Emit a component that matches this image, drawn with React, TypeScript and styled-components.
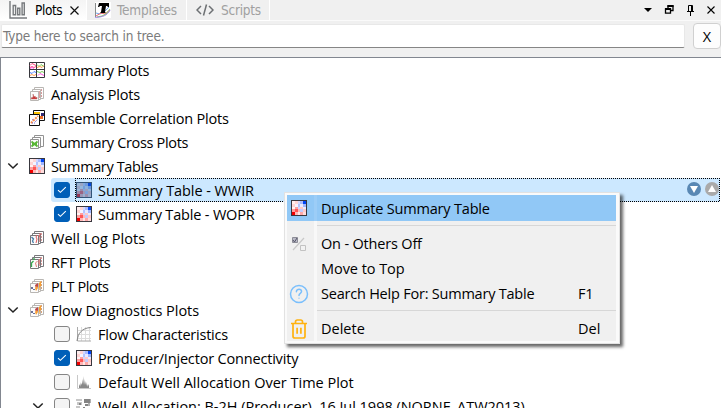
import React from "react";
import styled, { createGlobalStyle, css } from "styled-components";

const Global = createGlobalStyle`
  * { box-sizing: border-box; }
  html, body { margin: 0; overflow: hidden; background: #f0f0f0; }
`;

const Window = styled.main`
  position: relative;
  display: flex;
  flex-direction: column;
  width: 721px;
  height: 408px;
  overflow: hidden;
  background: #f0f0f0;
  color: #000;
  font-family: "Open Sans", "Noto Sans", sans-serif;
  font-size: 14.5px;
`;

const tahoma = css`
  font-family: "DejaVu Sans Condensed", "DejaVu Sans", sans-serif;
  font-stretch: condensed;
  font-size: 13.5px;
`;

const Label = styled.span<{ $track?: number }>`
  white-space: pre;
  letter-spacing: ${(p) => p.$track ?? 0}px;
`;

const TabBar = styled.nav`
  display: flex;
  height: 21px;
  flex: none;
`;

const Tab = styled.div<{ $width: number; $active?: boolean; $pad: number; $gap: number }>`
  ${tahoma}
  display: flex;
  align-items: center;
  width: ${(p) => p.$width}px;
  padding-left: ${(p) => p.$pad}px;
  gap: ${(p) => p.$gap}px;
  color: ${(p) => (p.$active ? "#000" : "#a0a0a0")};
  background: ${(p) => (p.$active ? "linear-gradient(#f4f4f4, #fff)" : "#f0f0f0")};
  border-right: 1px solid #fff;
  border-bottom: 1px solid #fff;
  svg { flex: none; }
`;

const DockButtons = styled.div`
  display: flex;
  flex: 1;
  align-items: center;
  justify-content: flex-end;
  padding-right: 5px;
  border-bottom: 1px solid #fafafa;
`;

const SearchRow = styled.div`
  display: flex;
  height: 36px;
  flex: none;
  padding: 3px 0 0 1px;
`;

const SearchField = styled.div`
  ${tahoma}
  display: flex;
  align-items: center;
  width: 684px;
  height: 24px;
  padding: 0 0 1px 1px;
  color: #7b7b7b;
  background: #fff;
  border: 1px solid #e8e8e8;
  border-bottom-color: #868686;
  border-radius: 2px;
`;

const ClearButton = styled.button`
  display: flex;
  align-items: center;
  justify-content: center;
  width: 28px;
  height: 26px;
  margin: -1px 0 0 8px;
  padding: 0;
  font: inherit;
  color: #000;
  background: #fdfdfd;
  border: 1px solid #d0d0d0;
  border-radius: 4px;
`;

const Tree = styled.ul`
  flex: 1;
  min-height: 0;
  margin: 0;
  padding: 0;
  overflow: hidden;
  list-style: none;
  background: #fff;
  border-top: 1px solid #828790;
  border-left: 1px solid #828790;
`;

const TreeRow = styled.li<{ $nested?: boolean }>`
  display: flex;
  height: 24px;
  align-items: center;
  padding-left: ${(p) => (p.$nested ? 25 : 0)}px;
`;

const Twisty = styled.div`
  display: flex;
  width: 25px;
  height: 24px;
  align-items: center;
  padding-left: 6px;
`;

const CheckCell = styled.div<{ $selected?: boolean }>`
  display: flex;
  width: 24px;
  height: 24px;
  align-items: center;
  padding-left: 3px;
  background: ${(p) => (p.$selected ? "#cce8ff" : "transparent")};
  border-radius: 3px 0 0 3px;
`;

const CheckBox = styled.span<{ $on?: boolean }>`
  display: flex;
  width: 16px;
  height: 16px;
  align-items: center;
  justify-content: center;
  background: ${(p) => (p.$on ? "#005fb8" : "#f4f4f4")};
  border: 1px solid ${(p) => (p.$on ? "#005fb8" : "#858585")};
  border-radius: 3px;
`;

const ItemBody = styled.div<{ $selected?: boolean; $top?: boolean }>`
  position: relative;
  display: flex;
  width: ${(p) => (p.$selected ? "645px" : "auto")};
  height: 24px;
  align-items: center;
  gap: 6px;
  padding-left: ${(p) => (p.$top ? 3 : 1)}px;
  background: ${(p) => (p.$selected ? "#cce8ff" : "transparent")};
  svg { flex: none; }
`;

const FocusOutline = styled.svg`
  position: absolute;
  inset: 0;
`;

const RowActions = styled.div`
  display: flex;
  gap: 4px;
  margin: -2px 1px 0 auto;
`;

const Menu = styled.div`
  position: absolute;
  left: 284px;
  top: 192px;
  width: 336px;
  height: 152px;
  padding: 2px;
  background: #fafafa;
  border: 1px solid #e2e2e2;
  box-shadow: 3px 3px 3px rgba(0, 0, 0, 0.6);
`;

const MenuPanel = styled.div`
  width: 329px;
  height: 146px;
  padding-top: 1px;
  background: linear-gradient(to right, #f0f0f0 27px, #f8f8f8 27px, #f8f8f8 30px, #f0f0f0 30px);
`;

const MenuItem = styled.div<{ $hot?: boolean }>`
  display: grid;
  grid-template-columns: 34px 257px 1fr;
  height: 25px;
  align-items: center;
  ${(p) =>
    p.$hot &&
    css`
      height: 26px;
      margin-top: -1px;
      background: linear-gradient(to right, #91c8f6 27px, #9ccdf7 27px, #9ccdf7 30px, #91c8f6 30px);
    `}
`;

const MenuIcon = styled.span`
  display: flex;
  width: 24px;
  align-items: center;
  justify-content: center;
`;

const MenuLine = styled.div`
  height: 1px;
  margin: 4px 0 5px 30px;
  background: #d7d7d7;
`;

/* Icons */

const heatCells = [
  ["#ffeeee", "#ffd4d4", "#d0d8ff", "#a9baff", "#0045f5"],
  ["#ffd4d4", "#f4f4ff", "#b3c3ff", "#e7eaff", "#9fb4ff"],
  ["#fff2f2", "#ff9e9e", "#cdd6ff", "#ffc8c8", "#e9ecff"],
  ["#ff9e9e", "#ff5555", "#ffb8b8", "#c0ccff", "#ffc9c9"],
  ["#f20000", "#ffb6b6", "#ffe4e4", "#ffa8a8", "#ffdcdc"],
];

const HeatIcon = ({ dim }: { dim?: boolean }) => (
  <svg width="16" height="16" viewBox="0 0 16 16" shapeRendering="crispEdges">
    <rect width="16" height="16" fill="#38373e" />
    {heatCells.map((row, y) =>
      row.map((c, x) => {
        const edge = [1, 4, 7, 9, 12, 15];
        return <rect key={`${x}-${y}`} x={edge[x]} y={edge[y]} width={edge[x + 1] - edge[x]} height={edge[y + 1] - edge[y]} fill={c} />;
      })
    )}
    {dim && <rect width="16" height="16" fill="#2b76b5" opacity=".48" />}
    {dim && <rect x="12" y="1" width="3" height="3" fill="#0548d8" />}
  </svg>
);

const CurvesIcon = () => (
  <svg width="16" height="16" viewBox="0 0 16 16" fill="none">
    <path fill="#fff" stroke="#36363c" d="M.5.5h15v15H.5zM7.5 1v14M1 7.5h14" />
    <path stroke="#ff477f" d="M1 3.5l2-2 2 1 2 1M1 5.5l2-1 2 1 2-1" />
    <path stroke="#fc54de" d="M1 6.5l2-1 2 1M9 13.5l2-2 2 1 2 1" />
    <path stroke="#7ace58" d="M8 2.5l2 2 2-2 3 2M8 9.5l3 1 2-1 2 1" />
    <path stroke="#ff9e4b" d="M8 5.5l3-1 2 1 2-2M1 13.5l2-1 2 1 2-1" />
    <path stroke="#4f7eff" d="M1 10.5l2 1 2-2 2 1" />
  </svg>
);

type StackKind = "hist" | "cross" | "log" | "rft" | "flow";

const StackIcon = ({ kind }: { kind: StackKind }) => {
  const line = kind === "log" || kind === "rft" ? "#77777b" : kind === "cross" ? "#929292" : "#b9b6b3";
  return (
    <svg width="16" height="16" viewBox="0 0 16 16" fill="none">
      <path d="M5.5 1.5h9v11h-9z" fill="#fff" stroke={line} />
      {kind !== "cross" && <path d="M12.5 3v8" stroke={kind === "flow" ? "#d7a278" : "#d99b9b"} strokeDasharray="2 1" />}
      <path d="M3.5 3.5h8v10h-8z" fill="#fff" stroke={line} />
      {kind !== "cross" && <path d="M10 5v7" stroke={kind === "flow" ? "#efaa52" : "#d48181"} strokeWidth="1.5" />}
      <path d="M1.5 5.5h8v9h-8z" fill="#fcfcfc" stroke={line} />
      {kind === "hist" && <path fill="#ce3030" stroke="#b96d6d" strokeWidth=".5" d="M2 13l1-2 1 1V8l1 3 1-1 1 2 1-1v2z" />}
      {kind === "cross" && <path stroke="#58b735" strokeWidth="1.7" d="M2.5 7.5l6 5M2.5 12.5l6-5M3 10h5" />}
      {kind === "log" && <><path stroke="#477da8" strokeWidth="1.3" d="M2.5 7l2 2-1 2 1 2" /><path stroke="#db5b5e" d="M8 5l-1 2 1 2-1 4M11 3v2l-1 2" /></>}
      {kind === "rft" && <><path stroke="#39a850" strokeWidth="1.3" d="M2.5 13V9l2-2M5 6V4" /><path stroke="#e27979" d="M8.5 7l-2 2 1 4M12 4l-2 2v4" /></>}
      {kind === "flow" && <><path fill="#bc474a" d="M6 7l3-2v4l-2 2z" /><path fill="#f8a033" d="M6 10l2-2 1 2-2 3zM10 5l2-2v5l-2 2z" /><path fill="#6b719a" d="M2 9h2v2H2zM4 11h2v1H4z" /></>}
    </svg>
  );
};

const CorrelationIcon = () => (
  <svg width="16" height="16" viewBox="0 0 16 16" fill="none">
    <path stroke="#111" fill="#fff" d="M4.5.5h11v10h-11z" />
    <path fill="#ffc400" d="M5 2h6v2H5z" /><path fill="#332b75" d="M12 3h3v3h-3z" />
    <path fill="#ef6e25" d="M11 6h3v3h-3z" />
    <path stroke="#111" fill="#fff" d="M.5 4.5h10v11H.5z" />
    <path stroke="#ff8b45" strokeWidth="2" strokeDasharray="2 1" d="M2 13l7-7" />
    <path stroke="#7463d2" strokeDasharray="1 1" d="M3 10l2-1M6 12l3-3M3 13h3" />
  </svg>
);

const FlowIcon = () => (
  <svg width="16" height="16" viewBox="0 0 16 16" fill="none">
    <path stroke="#ddd" d="M1 4.5h14M1 8.5h14M1 12.5h14M5.5 1v14M9.5 1v14M13.5 1v14" />
    <path stroke="#aaa" d="M1.5 1v14H15" /><path stroke="#858585" d="M1 15C2 7 6 2 15 1.5" />
  </svg>
);

const AllocationIcon = () => (
  <svg width="16" height="16" viewBox="0 0 16 16">
    <path fill="none" stroke="#c8c8c8" d="M1.5 1v13.5H15" />
    <path fill="#898989" d="M3 14v-4l1 2V8l1 5V9l1 2V5l1 5V2l1 9V5l1 6V7l1 4V8l1 4v-2l1 3v-3l1 2v2z" />
  </svg>
);

const WellIcon = () => (
  <svg width="16" height="16" viewBox="0 0 16 16" shapeRendering="crispEdges">
    <path fill="#c7c7c7" d="M0 1h6v2H0zM1 4h5v3H1zM0 8h4v3H0zM1 12h6v2H1z" />
    <path fill="#858585" d="M8 1h6v4H8zM3 5h2v2H3zM9 6h3v2H9zM7 9h2v3H7z" />
    <path fill="#b0b0b0" d="M14 1h1v4h-1zM12 5h2v3h-2z" />
  </svg>
);

const Chevron = () => (
  <svg width="12" height="8" viewBox="0 0 12 8" fill="none"><path d="M1.3 1.5L6 6l4.7-4.5" stroke="#222" strokeWidth="1.5" /></svg>
);

const Tick = () => (
  <svg width="10" height="8" viewBox="0 0 10 8" fill="none"><path d="M1 4.1l2.4 2.2L8.8 1.2" stroke="#fff" strokeWidth="1.1" /></svg>
);

const PlotsIcon = () => (
  <svg width="18" height="19" viewBox="0 0 18 19" fill="none" stroke="#777a7d" strokeWidth="1.4">
    <path d="M1 0v17h17M4.2 4.5h2.4v9.3H4.2zM8.7 7.2h2.1v6.6H8.7zM13.1 2h2.2v11.8h-2.2z" />
  </svg>
);

const TemplateIcon = () => (
  <svg width="16" height="16" viewBox="0 0 16 16" fill="none">
    <path fill="#fff" d="M0 0h16v16H0z" /><path stroke="#888b8b" d="M.5 1v14" />
    <path stroke="#73a9ed" d="M1 11l4 1 4-2 5-5" /><path stroke="#ed6a6a" d="M1 14l5-3 4 1 5-4" />
    <path stroke="#82c968" d="M2 15l5-1 4-2 4-5" /><path stroke="#9981e2" d="M0 15.3c8 0 12-2 15-7" />
    <path fill="#000" d="M4 1h10v4h-1l-1-1h-1l-1 6 1 1H5l1-1 1-6H5L4 5H3z" />
  </svg>
);

const CodeIcon = () => (
  <svg width="18" height="12" viewBox="0 0 18 12" fill="none" stroke="#6d7073" strokeWidth="1.5"><path d="M5 2L1 6l4 4M13 2l4 4-4 4M10.5.5l-3 11" /></svg>
);

const CloseIcon = () => (
  <svg width="9" height="10" viewBox="0 0 9 10" stroke="#111" strokeWidth="1.2"><path d="M.5 1.5l8 8M8.5 1.5l-8 8" /></svg>
);

const DockIcons = () => (
  <svg width="73" height="14" viewBox="643 3 73 14" fill="none" stroke="#000">
    <path fill="#000" stroke="none" d="M644 8h8l-4 4z" />
    <path strokeWidth="1.3" d="M668 8V5.8h5v4.7h-2M665.5 9h5v4.2h-5z" /><path strokeWidth="2" d="M667.5 6h6M665 9h6" />
    <path d="M688.5 5.5h4v6h-4zM687 11.5h7M690.5 12v4M691.5 6v5" />
    <path strokeWidth="1.1" d="M707.5 6.5l7 7M714.5 6.5l-7 7" />
  </svg>
);

const ArrowBadge = ({ up }: { up?: boolean }) => (
  <svg width="14" height="14" viewBox="0 0 14 14">
    <circle cx="7" cy="7" r="7" fill={up ? "#aaa" : "#5988b4"} />
    <path fill="#fff" d={up ? "M7 3l4 7H3z" : "M3 4h8l-4 7z"} />
  </svg>
);

const ToggleIcon = () => (
  <svg width="16" height="16" viewBox="0 0 16 16" fill="none">
    <path d="M2 14L13 2" stroke="#c8c8c8" strokeWidth="1.2" /><path fill="#b9b9c5" stroke="#8c8c96" d="M1.5 1.5h5v5h-5z" />
    <path stroke="#555569" d="M2 4l1.5 2L6 2" /><path fill="#f2f2f2" stroke="#c2c2c2" d="M9.5 9.5h5v5h-5z" />
  </svg>
);

const HelpIcon = () => (
  <svg width="20" height="20" viewBox="0 0 20 20" fill="none" stroke="#7abffc" strokeWidth="1.5">
    <circle cx="10" cy="10" r="8.5" /><path d="M7.4 7.8c0-3.6 5.5-3.3 5.1-.1-.2 1.6-2.5 1.7-2.5 3.7" strokeLinecap="round" /><circle cx="10" cy="14.2" r=".6" fill="#7abffc" stroke="none" />
  </svg>
);

const TrashIcon = () => (
  <svg width="18" height="20" viewBox="0 0 18 20" fill="none" stroke="#ffb20f" strokeWidth="1.7" strokeLinejoin="round">
    <path d="M1 4.5h16M3 4.5v12.7q0 1.8 2 1.8h8q2 0 2-1.8V4.5M5.5 4V2.8Q5.5 1 7.3 1h3.4q1.8 0 1.8 1.8V4M7.1 8.7v6M10.9 8.7v6" />
  </svg>
);

type Entry = { text: string; icon: React.ReactNode; track?: number; open?: boolean; nested?: boolean; checked?: boolean; selected?: boolean };

const entries: Entry[] = [
  { text: "Summary Plots", icon: <CurvesIcon />, track: -0.3 },
  { text: "Analysis Plots", icon: <StackIcon kind="hist" />, track: -0.18 },
  { text: "Ensemble Correlation Plots", icon: <CorrelationIcon />, track: -0.2 },
  { text: "Summary Cross Plots", icon: <StackIcon kind="cross" />, track: -0.32 },
  { text: "Summary Tables", icon: <HeatIcon />, track: -0.38, open: true },
  { text: "Summary Table - WWIR", icon: <HeatIcon dim />, track: -0.07, nested: true, checked: true, selected: true },
  { text: "Summary Table - WOPR", icon: <HeatIcon />, track: -0.17, nested: true, checked: true },
  { text: "Well Log Plots", icon: <StackIcon kind="log" />, track: 0.03 },
  { text: "RFT Plots", icon: <StackIcon kind="rft" />, track: -0.2 },
  { text: "PLT Plots", icon: <StackIcon kind="flow" />, track: -0.4 },
  { text: "Flow Diagnostics Plots", icon: <StackIcon kind="flow" />, track: -0.05, open: true },
  { text: "Flow Characteristics", icon: <FlowIcon />, track: -0.22, nested: true },
  { text: "Producer/Injector Connectivity", icon: <HeatIcon />, track: -0.18, nested: true, checked: true },
  { text: "Default Well Allocation Over Time Plot", icon: <AllocationIcon />, track: 0, nested: true },
  { text: "Well Allocation: B-2H (Producer), 16 Jul 1998 (NORNE_ATW2013)", icon: <WellIcon />, track: -0.02, nested: true, open: true },
];

export default function App() {
  return (
    <Window>
      <Global />
      <TabBar>
        <Tab $width={87} $active $pad={9} $gap={8}><PlotsIcon /><Label $track={-0.4}>Plots</Label><CloseIcon /></Tab>
        <Tab $width={100} $pad={8} $gap={6}><TemplateIcon /><Label $track={-0.17}>Templates</Label></Tab>
        <Tab $width={83} $pad={9} $gap={7}><CodeIcon /><Label $track={-0.25}>Scripts</Label></Tab>
        <DockButtons><DockIcons /></DockButtons>
      </TabBar>
      <SearchRow>
        <SearchField><Label $track={-0.17}>Type here to search in tree.</Label></SearchField>
        <ClearButton>X</ClearButton>
      </SearchRow>
      <Tree>
        {entries.map((e) => (
          <TreeRow key={e.text} $nested={e.nested}>
            <Twisty>{e.open && <Chevron />}</Twisty>
            {e.nested && <CheckCell $selected={e.selected}><CheckBox $on={e.checked}>{e.checked && <Tick />}</CheckBox></CheckCell>}
            <ItemBody $top={!e.nested} $selected={e.selected}>
              {e.selected && <FocusOutline width="645" height="24"><rect x=".5" y=".5" width="644" height="23" fill="none" stroke="#000" strokeDasharray="1 1" strokeDashoffset=".5" shapeRendering="crispEdges" /></FocusOutline>}
              {e.icon}<Label $track={e.track}>{e.text}</Label>
              {e.selected && <RowActions><ArrowBadge /><ArrowBadge up /></RowActions>}
            </ItemBody>
          </TreeRow>
        ))}
      </Tree>
      <Menu>
        <MenuPanel>
          <MenuItem $hot><MenuIcon><HeatIcon /></MenuIcon><Label $track={-0.19}>Duplicate Summary Table</Label></MenuItem>
          <MenuLine />
          <MenuItem><MenuIcon><ToggleIcon /></MenuIcon><Label $track={-0.18}>On - Others Off</Label></MenuItem>
          <MenuItem><MenuIcon /><Label $track={-0.05}>Move to Top</Label></MenuItem>
          <MenuItem><MenuIcon><HelpIcon /></MenuIcon><Label $track={-0.22}>Search Help For: Summary Table</Label><Label $track={-0.3}>F1</Label></MenuItem>
          <MenuLine />
          <MenuItem><MenuIcon><TrashIcon /></MenuIcon><Label>Delete</Label><Label>Del</Label></MenuItem>
        </MenuPanel>
      </Menu>
    </Window>
  );
}
